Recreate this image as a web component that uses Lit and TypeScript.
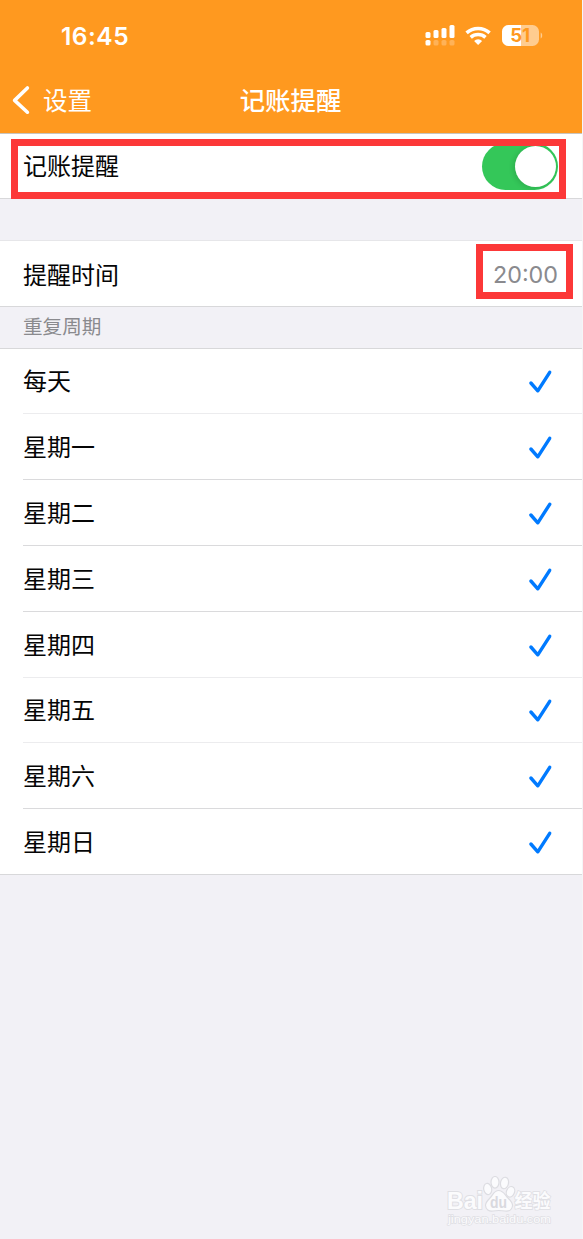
import { LitElement, html, css, svg } from 'lit';
import { customElement, property } from 'lit/decorators.js';

const DAYS = ['每天', '星期一', '星期二', '星期三', '星期四', '星期五', '星期六', '星期日'];

@customElement('status-bar')
class StatusBar extends LitElement {
  static styles = css`
    :host {
      display: flex;
      justify-content: space-between;
      align-items: center;
      height: 72px;
      padding: 0 39px 0 61px;
      color: #fff;
    }
    .time {
      font: 600 24.5px/30px Inter, sans-serif;
      letter-spacing: 0.5px;
    }
    .icons {
      display: flex;
      align-items: center;
    }
    svg {
      display: block;
    }
    .level {
      font: 700 18.5px Inter, sans-serif;
    }
  `;
  render() {
    const bars = [
      [0, 7, 6],
      [8, 5, 8],
      [16, 3, 10],
      [24, 0, 13],
    ];
    return html`
      <span class="time">16:45</span>
      <div class="icons">
        <svg width="118" height="24" viewBox="0 0 118 24" fill="#fff">
          ${bars.map(
            ([x, y, h], i) => svg`
              <rect x=${x + 0.5} y=${y + 1} width="5" height=${h} rx="1.5"></rect>
              <rect x=${x + 0.5} y="16" width="5" height="5.5" rx="1.6" opacity=${i ? 0.25 : 1}></rect>`
          )}
          <g fill="none" stroke="#fff" stroke-width="3.5">
            <path d="M41.6 8.9a17 17 0 0 1 23 0"></path>
            <path d="M45.7 13.4a11 11 0 0 1 14.8 0"></path>
          </g>
          <path d="M49.1 16.9a5.8 5.8 0 0 1 8 0L53.1 21z"></path>
          <rect x="77" y="1" width="37" height="21" rx="6.5" opacity=".5"></rect>
          <path d="M83.5 1H96v21H83.5a6.5 6.5 0 0 1-6.5-6.5v-8A6.5 6.5 0 0 1 83.5 1z"></path>
          <path d="M115.7 8.5c2 1 2 5 0 6z" opacity=".5"></path>
          <text class="level" x="85.2" y="18.2" fill="#ff991f" textLength="20" lengthAdjust="spacingAndGlyphs">51</text>
        </svg>
      </div>
    `;
  }
}

@customElement('nav-bar')
class NavBar extends LitElement {
  static styles = css`
    :host {
      display: grid;
      grid-template-columns: 1fr auto 1fr;
      align-items: center;
      height: 55px;
      padding: 0 13px 4px 12px;
      color: #fff;
    }
    .back {
      display: flex;
      align-items: center;
      gap: 13px;
      font-size: 24.5px;
      line-height: 36px;
    }
    .title {
      font-size: 25.4px;
      line-height: 36px;
      font-weight: 500;
      padding-bottom: 1px;
    }
  `;
  render() {
    return html`
      <div class="back">
        <svg width="18" height="30" viewBox="0 0 18 30" fill="none" stroke="#fff" stroke-width="3.6" stroke-linecap="round" stroke-linejoin="round">
          <path d="M15.4 3L2.6 15.4L15.4 27.2"></path>
        </svg>
        <span>设置</span>
      </div>
      <div class="title">记账提醒</div>
      <div></div>
    `;
  }
}

@customElement('day-row')
class DayRow extends LitElement {
  @property() label = '';
  static styles = css`
    :host {
      display: flex;
      padding-left: 23px;
    }
    .body {
      flex: 1;
      display: flex;
      align-items: center;
      justify-content: space-between;
      padding-right: 29px;
      border-bottom: var(--rule, 1px) solid var(--line, #dadadc);
    }
    .label {
      padding-bottom: 2px;
    }
  `;
  render() {
    return html`
      <div class="body">
        <span class="label">${this.label}</span>
        <svg width="26" height="26" viewBox="0 0 26 26" fill="none" stroke="#007aff" stroke-width="3.4" stroke-linecap="round" stroke-linejoin="round">
          <path d="M3.9 15L10.8 22.8L22.7 4.3"></path>
        </svg>
      </div>
    `;
  }
}

@customElement('baidu-mark')
class BaiduMark extends LitElement {
  static styles = css`
    :host,
    svg {
      display: block;
    }
    text {
      fill: #fbfbfd;
      stroke: #dfdfe4;
      paint-order: stroke;
    }
    .brand {
      font: 700 24.5px 'Liberation Sans', sans-serif;
      stroke-width: 2px;
    }
    .cn {
      font: 700 19px 'Noto Sans CJK SC', sans-serif;
      stroke-width: 1.6px;
    }
    .url {
      font: 400 11px 'Liberation Sans', sans-serif;
      stroke-width: 1.3px;
    }
    .du {
      font: 700 16px 'Liberation Sans', sans-serif;
      fill: #d9d9df;
      stroke: none;
    }
  `;
  render() {
    return html`
      <svg width="112" height="54" viewBox="0 0 112 54">
        <text class="brand" x="6" y="33" textLength="36" lengthAdjust="spacingAndGlyphs">Bai</text>
        <g transform="translate(1.5 -1)" fill="#fbfbfd" stroke="#dddde2" stroke-width="1.2">
          <ellipse cx="45.2" cy="14" rx="4" ry="5.6" transform="rotate(-12 45.2 14)"></ellipse>
          <ellipse cx="52.5" cy="7.3" rx="4" ry="5.8"></ellipse>
          <ellipse cx="62" cy="8" rx="4" ry="5.8" transform="rotate(12 62 8)"></ellipse>
          <ellipse cx="68" cy="16.8" rx="4" ry="5.4" transform="rotate(22 68 16.8)"></ellipse>
          <path d="M56 15.5c5 0 6.5 4.5 9.5 7.5c3 3 5 5 4.500 8c-.6 4-4 5.500-7.500 5c-4.500-.7-8-.7-12 0c-4 .6-7.300-1.500-7.500-5.500c-.1-3 2-5 4.500-7.500c3-3 4-7.500 8.500-7.500z"></path>
        </g>
        <text class="du" x="49" y="32" textLength="17" lengthAdjust="spacingAndGlyphs">du</text>
        <text class="cn" x="73.5" y="31.5" textLength="36" lengthAdjust="spacingAndGlyphs">经验</text>
        <text class="url" x="7" y="47" textLength="103" lengthAdjust="spacingAndGlyphs">jingyan.baidu.com</text>
      </svg>
    `;
  }
}

@customElement('app-root')
class AppRoot extends LitElement {
  static styles = css`
    :host {
      display: flex;
      flex-direction: column;
      position: relative;
      box-sizing: border-box;
      height: 1239px;
      border-right: 1px solid #f5f5f7;
      background: #f2f1f6;
      color: #050505;
      font: 400 24px/36px 'Noto Sans CJK SC', sans-serif;
    }
    .header {
      height: 133px;
      background: #ff991f;
      border-bottom: 1px solid #c9c4bd;
    }
    .row {
      display: flex;
      align-items: center;
      justify-content: space-between;
      background: #fff;
      padding: 0 24px 0 23px;
      border-bottom: 1px solid #d8d8da;
    }
    .switch-row {
      height: 64px;
    }
    .switch-label {
      padding-bottom: 2px;
    }
    .time-row {
      height: 65px;
      margin-top: 41px;
      border-top: 1px solid #e6e6e9;
    }
    .switch {
      display: flex;
      justify-content: flex-end;
      box-sizing: border-box;
      width: 76px;
      height: 47px;
      padding: 3px 2.5px 3px 3px;
      border-radius: 24px;
      background: #34c759;
    }
    .knob {
      width: 41px;
      height: 41px;
      border-radius: 50%;
      background: #fff;
      box-shadow: -2px 1px 5px rgba(0, 0, 0, 0.12);
    }
    .value {
      padding-top: 2px;
      font: 400 23.3px/36px Inter, sans-serif;
      color: #8a8a8e;
    }
    .section {
      height: 41px;
      padding-left: 23px;
      font-size: 19.6px;
      line-height: 38px;
      color: #8a8a8e;
      border-bottom: 1px solid #d8d8da;
    }
    .days {
      display: grid;
      grid-template-rows: 65px 66px 66px 66px 66px 65px 66px 65px;
      background: #fff;
      border-bottom: 1px solid #d8d8da;
    }
    .soft {
      --line: #ececee;
    }
    .last {
      --rule: 0;
    }
    .mark {
      margin: auto 29px 9px auto;
    }
    .highlight {
      position: absolute;
      box-sizing: border-box;
      border: 7px solid #fc3838;
    }
    .on-switch {
      left: 11px;
      top: 139px;
      width: 555px;
      height: 60px;
    }
    .on-time {
      left: 476px;
      top: 244px;
      width: 97px;
      height: 55px;
    }
  `;
  render() {
    return html`
      <div class="header">
        <status-bar></status-bar>
        <nav-bar></nav-bar>
      </div>
      <div class="row switch-row">
        <span class="switch-label">记账提醒</span>
        <div class="switch"><div class="knob"></div></div>
      </div>
      <div class="row time-row">
        <span>提醒时间</span>
        <span class="value">20:00</span>
      </div>
      <div class="section">重复周期</div>
      <div class="days">
        ${DAYS.map(
          (d, i) => html`<day-row class=${i === 7 ? 'last' : [0, 4, 5].includes(i) ? 'soft' : ''} .label=${d}></day-row>`
        )}
      </div>
      <baidu-mark class="mark"></baidu-mark>
      <div class="highlight on-switch"></div>
      <div class="highlight on-time"></div>
    `;
  }
}
